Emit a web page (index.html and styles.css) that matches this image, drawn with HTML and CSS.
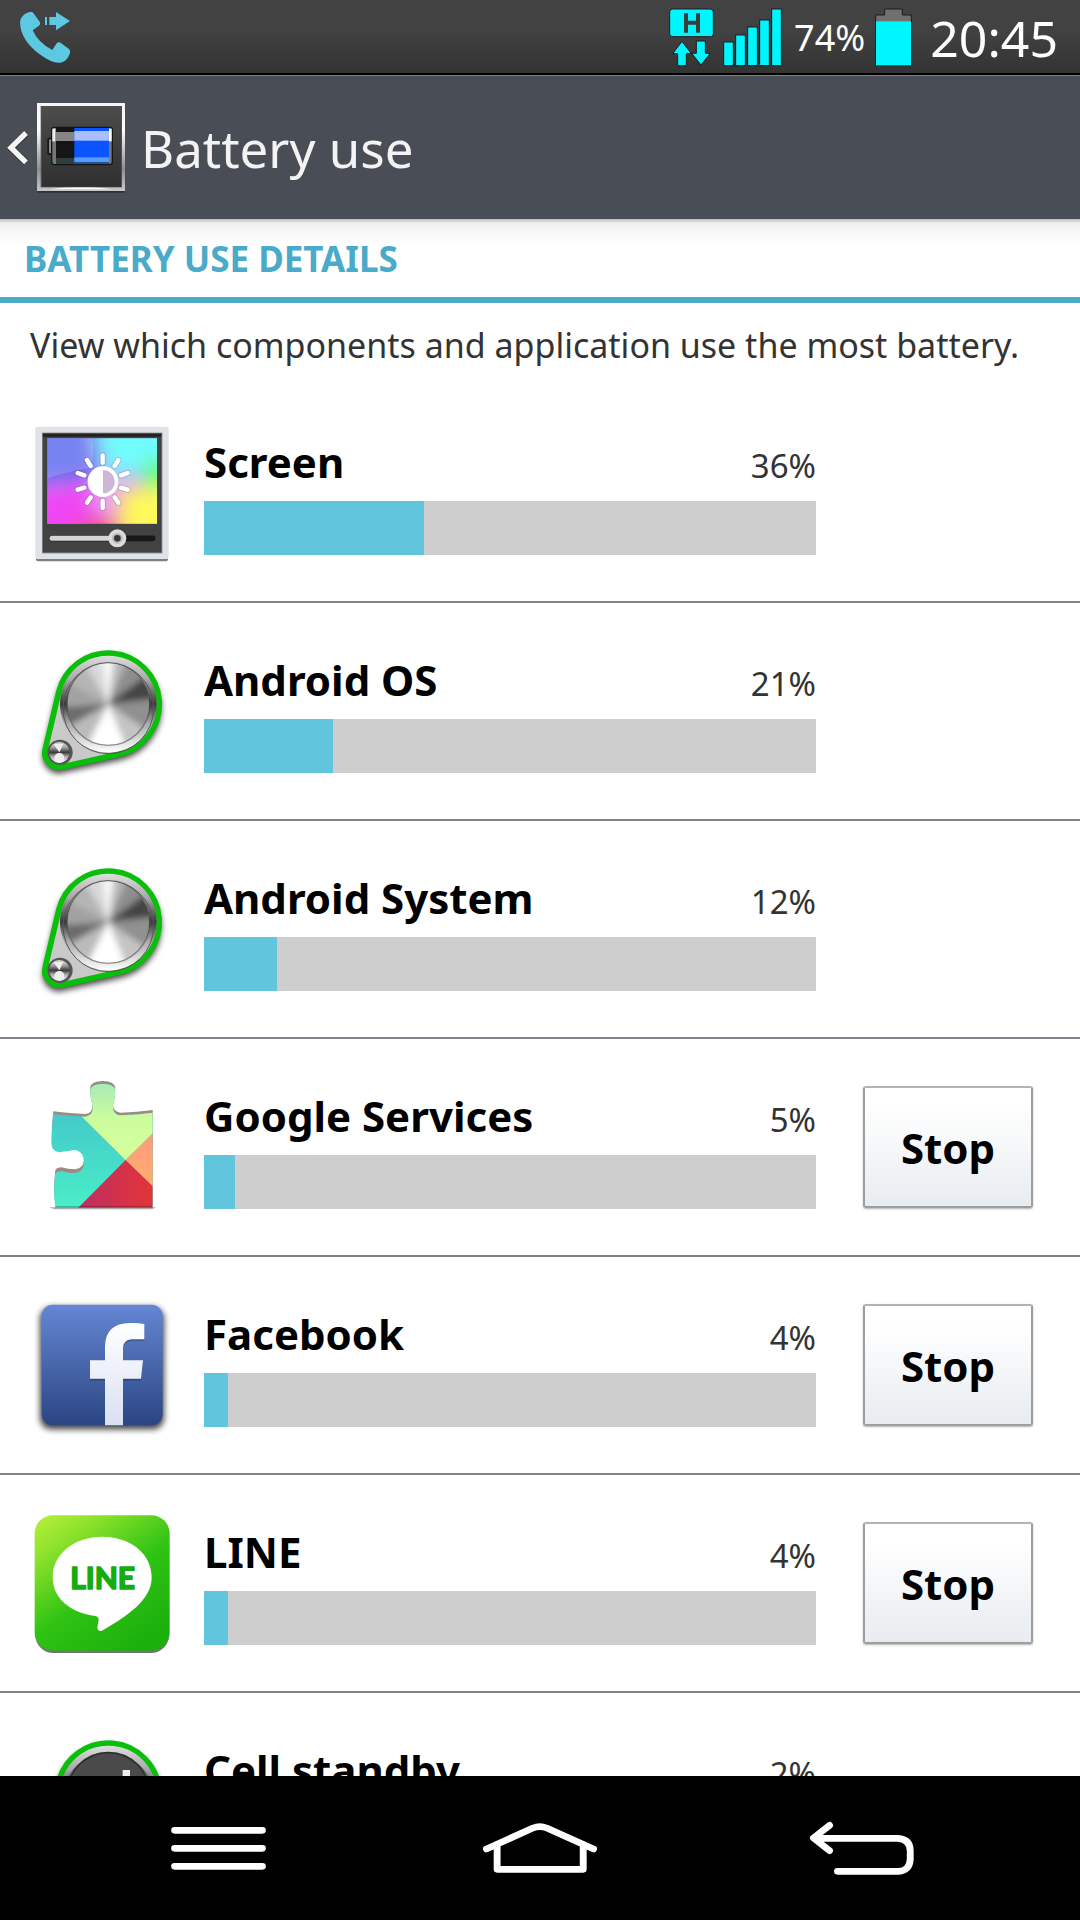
FILE: index.html
```html
<!DOCTYPE html>
<html lang="en">
<head>
    <meta charset="UTF-8">
    <meta name="viewport" content="width=device-width, initial-scale=1.0">
    <title>Battery use</title>
    <link rel="stylesheet" href="styles.css">
</head>
<body>
    <!-- Shared icon shapes -->
    <svg class="defs" aria-hidden="true">
        <defs>
            <linearGradient id="chrome" x1="0" y1="0" x2="0" y2="1">
                <stop offset="0" stop-color="#f4f4f4"/>
                <stop offset=".3" stop-color="#fff"/>
                <stop offset=".75" stop-color="#8d8d91"/>
                <stop offset="1" stop-color="#c8c8cc"/>
            </linearGradient>
            <linearGradient id="dark" x1="0" y1="0" x2="0" y2="1">
                <stop offset="0" stop-color="#4c4c4c"/>
                <stop offset="1" stop-color="#2f2f2f"/>
            </linearGradient>
            <linearGradient id="rim" x1="0" y1="0" x2="0" y2="1">
                <stop offset="0" stop-color="#dedede"/>
                <stop offset=".25" stop-color="#a8a8a8"/>
                <stop offset=".5" stop-color="#3a3a3a"/>
                <stop offset=".7" stop-color="#aaa"/>
                <stop offset="1" stop-color="#fff"/>
            </linearGradient>
            <filter id="soft" x="-20%" y="-20%" width="140%" height="140%">
                <feGaussianBlur stdDeviation="9"/>
            </filter>
            <filter id="wide" x="-30%" y="-30%" width="160%" height="160%">
                <feGaussianBlur stdDeviation="28"/>
            </filter>
            <clipPath id="face"><circle cx="265" cy="222" r="123"/></clipPath>
            <symbol id="knob" viewBox="42 39 408 408" overflow="visible">
                <path d="M116 187A153 153 0 1 1 298 372L128 410A43 43 0 0 1 76 357Z" fill="#000" opacity=".75" stroke="#000" stroke-width="12" transform="translate(0 12)" filter="url(#soft)"/>
                <path d="M116 187A153 153 0 1 1 298 372L128 410A43 43 0 0 1 76 357Z" fill="#c9c9c9" stroke="#0abf0a" stroke-width="17"/>
                <circle cx="265" cy="222" r="145" fill="url(#rim)"/>
                <circle cx="265" cy="235" r="136" fill="none" stroke="#555" stroke-width="3"/>
                <g clip-path="url(#face)">
                    <circle cx="265" cy="222" r="124" fill="#b5b5b5"/>
                    <g filter="url(#soft)">
                        <path d="M265 222L180 80H270Z" fill="#d8d8d8"/>
                        <path d="M265 222L240 60H290Z" fill="#f6f6f6"/>
                        <path d="M265 222L335 70L430 150Z" fill="#8e8e8e"/>
                        <path d="M265 222L400 120L430 205Z" fill="#454545"/>
                        <path d="M265 222L430 205L410 340Z" fill="#909090"/>
                        <path d="M265 222L410 320L330 380Z" fill="#c4c4c4"/>
                        <path d="M265 222L330 380H185Z" fill="#fff"/>
                        <path d="M265 222L180 380L100 300Z" fill="#bbb"/>
                        <path d="M265 222L110 310L100 232Z" fill="#6c6c6c"/>
                        <path d="M265 222L100 228L110 140Z" fill="#a2a2a2"/>
                    </g>
                </g>
                <circle cx="265" cy="222" r="124" fill="none" stroke="#444" stroke-width="4" opacity=".55"/>
                <circle cx="120" cy="367" r="38" fill="#555"/>
                <circle cx="118" cy="367" r="31" fill="url(#rim)"/>
                <path d="M118 367L100 342H130Z" fill="#eee"/>
                <circle cx="118" cy="384" r="15" fill="#eee"/>
            </symbol>
        </defs>
    </svg>

    <div class="phone">
        <div class="status-bar">
            <svg class="call-icon" viewBox="60 36 150 153" aria-hidden="true">
                <g fill="#5cc8e2">
                    <path d="M86 37Q95 33 100 39L119 65Q123 71 117 77L98 91Q114 128 157 150L169 131Q174 124 182 128L206 146Q212 151 210 159Q202 184 182 188Q158 192 119 163Q61 120 60 66Q63 45 86 37Z"/>
                    <path d="M135 51H141V75H135ZM148 51H168V36L210 63L168 91V75H148Z"/>
                </g>
            </svg>
            <div class="status-info">
                <svg class="network-icon" viewBox="90 26 135 177" aria-hidden="true">
                    <g fill="#00f6ff" stroke="#1c1c1c" stroke-width="3">
                        <rect x="92" y="29" width="131" height="83" rx="9"/>
                        <path d="M129 126L157 163H142V199H116V163H101Z"/>
                        <path d="M172 125H199V162H214L186 197L158 162H172Z"/>
                    </g>
                    <path d="M135 42H147V64H171V42H183V100H171V76H147V100H135Z" fill="#3c3c3c"/>
                </svg>
                <svg class="signal-icon" viewBox="252 23 177 177" aria-hidden="true">
                    <g fill="#00f6ff" stroke="#1c1c1c" stroke-width="3">
                        <rect x="254" y="125" width="29" height="71"/>
                        <rect x="290" y="104" width="29" height="92"/>
                        <rect x="326" y="80" width="29" height="116"/>
                        <rect x="362" y="59" width="29" height="137"/>
                        <rect x="398" y="26" width="29" height="170"/>
                    </g>
                </svg>
                <span class="charge">74%</span>
                <svg class="charge-icon" viewBox="708 23 111 177" aria-hidden="true">
                    <path d="M710 196V44H737V26H790V44H817V196Z" fill="#707070" stroke="#1c1c1c" stroke-width="3"/>
                    <rect x="711" y="63" width="105" height="132" fill="#00f6ff"/>
                </svg>
                <span class="clock">20:45</span>
            </div>
        </div>

        <header class="title-bar">
            <button class="back" aria-label="Back">
                <svg class="chevron" viewBox="21 390 66 108" aria-hidden="true">
                    <path d="M79 400L34 444L79 488" fill="none" stroke="#2c2f34" stroke-width="22" opacity=".5"/>
                    <path d="M78 399L33 443L78 487" fill="none" stroke="#f6f6f6" stroke-width="16"/>
                </svg>
                <svg class="app-icon" viewBox="111 309 264 270" aria-hidden="true">
                    <rect x="112" y="314" width="263" height="264" fill="#2d3036"/>
                    <rect x="111" y="309" width="264" height="264" fill="url(#chrome)"/>
                    <path d="M150 568H336L280 561H206Z" fill="#fff"/>
                    <rect x="122" y="318" width="244" height="244" fill="#4f4e4b"/>
                    <rect x="126" y="322" width="237" height="238" fill="url(#dark)"/>
                    <rect x="142" y="413" width="18" height="52" rx="6" fill="#161616"/>
                    <rect x="147" y="418" width="10" height="42" rx="3" fill="#8a8a8a"/>
                    <rect x="153" y="380" width="186" height="116" rx="9" fill="#151515"/>
                    <rect x="157" y="384" width="178" height="108" rx="6" fill="#777"/>
                    <rect x="157" y="386" width="9" height="38" fill="#eee"/>
                    <rect x="327" y="386" width="8" height="38" fill="#fff"/>
                    <rect x="168" y="384" width="57" height="108" fill="#151515"/>
                    <rect x="168" y="396" width="57" height="27" fill="#858585"/>
                    <rect x="168" y="474" width="57" height="18" fill="#303c40"/>
                    <rect x="223" y="384" width="104" height="108" fill="#0a55ff"/>
                    <rect x="223" y="393" width="104" height="29" fill="#aabfff"/>
                    <rect x="223" y="472" width="104" height="14" fill="#5a9cf5"/>
                    <rect x="223" y="486" width="104" height="6" fill="#1a5590"/>
                </svg>
            </button>
            <h1 class="title">Battery use</h1>
        </header>

        <main class="content">
            <h2 class="section-title">BATTERY USE DETAILS</h2>
            <p class="note">View which components and application use the most battery.</p>

            <ul class="usage-list">
                <li class="usage">
                    <svg class="icon" viewBox="42 45 408 408" aria-hidden="true">
                        <defs>
                            <clipPath id="display"><rect x="82" y="85" width="329" height="256"/></clipPath>
                        </defs>
                        <rect x="48" y="60" width="396" height="394" rx="6" fill="#000" opacity=".5"/>
                        <rect x="46" y="50" width="400" height="397" rx="6" fill="#dfe2e6"/>
                        <rect x="66" y="68" width="361" height="362" fill="#777"/>
                        <rect x="69" y="71" width="355" height="356" fill="#424242"/>
                        <rect x="69" y="71" width="355" height="9" fill="#222"/>
                        <g clip-path="url(#display)">
                            <rect x="82" y="85" width="329" height="256" fill="#e8a0f0"/>
                            <g filter="url(#wide)">
                                <path d="M20 20H215L240 210L20 235Z" fill="#5f6cf0"/>
                                <path d="M220 20H470V180L260 200Z" fill="#6ffcff"/>
                                <path d="M370 150H480V260L370 235Z" fill="#60ff70"/>
                                <path d="M20 250L210 215L230 400H20Z" fill="#f045f5"/>
                                <path d="M180 325H330V400H150Z" fill="#f0508a"/>
                                <path d="M300 240L480 230V400H300Z" fill="#fff95c"/>
                            </g>
                            <path d="M82 85H215Q230 130 205 175Q140 185 82 205Z" fill="#fff" opacity=".16"/>
                        </g>
                        <g stroke="#555" stroke-width="19" stroke-linecap="round" opacity=".22">
                            <path d="M248 136V158M248 272V294M201 150L212 168M295 150L284 168M173 189L193 196M323 189L303 196M173 239L193 233M323 239L303 233M201 278L212 262M295 278L284 262"/>
                        </g>
                        <g stroke="#fff" stroke-width="13" stroke-linecap="round">
                            <path d="M248 136V158M248 272V294M201 150L212 168M295 150L284 168M173 189L193 196M323 189L303 196M173 239L193 233M323 239L303 233M201 278L212 262M295 278L284 262"/>
                        </g>
                        <circle cx="249" cy="215" r="46" fill="#fff"/>
                        <path d="M249 180A35 35 0 0 1 249 250Z" fill="#cdb6d8"/>
                        <path d="M96 385H398" stroke="#171717" stroke-width="17" stroke-linecap="round"/>
                        <path d="M96 385H270" stroke="#d5d5d5" stroke-width="15" stroke-linecap="round"/>
                        <circle cx="292" cy="385" r="27" fill="#dcdcdc"/>
                        <circle cx="292" cy="385" r="16" fill="#b8b8b8"/>
                        <circle cx="292" cy="385" r="10" fill="#35383b"/>
                    </svg>
                    <div class="details">
                        <div class="labels">
                            <span class="name">Screen</span>
                            <span class="percent">36%</span>
                        </div>
                        <div class="bar"><div class="fill" style="width: 36%"></div></div>
                    </div>
                    <div class="action"></div>
                </li>
                <li class="usage">
                    <svg class="icon" aria-hidden="true"><use href="#knob"/></svg>
                    <div class="details">
                        <div class="labels">
                            <span class="name">Android OS</span>
                            <span class="percent">21%</span>
                        </div>
                        <div class="bar"><div class="fill" style="width: 21%"></div></div>
                    </div>
                    <div class="action"></div>
                </li>
                <li class="usage">
                    <svg class="icon" aria-hidden="true"><use href="#knob"/></svg>
                    <div class="details">
                        <div class="labels">
                            <span class="name">Android System</span>
                            <span class="percent">12%</span>
                        </div>
                        <div class="bar"><div class="fill" style="width: 12%"></div></div>
                    </div>
                    <div class="action"></div>
                </li>
                <li class="usage">
                    <svg class="icon" viewBox="41 57 395 408" preserveAspectRatio="none" aria-hidden="true">
                        <defs>
                            <linearGradient id="teal" x1="0" y1="0" x2="0" y2="1">
                                <stop offset="0" stop-color="#42bccb"/>
                                <stop offset="1" stop-color="#49efc7"/>
                            </linearGradient>
                            <linearGradient id="lime" x1="0" y1="0" x2="0" y2="1">
                                <stop offset="0" stop-color="#a5eab5"/>
                                <stop offset=".5" stop-color="#cdfc9e"/>
                                <stop offset="1" stop-color="#d6ff9c"/>
                            </linearGradient>
                            <linearGradient id="red" x1="0" y1="0" x2="1" y2="0">
                                <stop offset="0" stop-color="#be2c62"/>
                                <stop offset="1" stop-color="#e33539"/>
                            </linearGradient>
                            <linearGradient id="peach" x1="0" y1="0" x2="0" y2="1">
                                <stop offset="0" stop-color="#ff9882"/>
                                <stop offset="1" stop-color="#ffb069"/>
                            </linearGradient>
                            <path id="piece" d="M97 162Q150 168 190 170Q212 167 212 142Q204 115 204 90Q207 72 241 71Q274 72 277 90Q277 115 270 140Q271 164 292 166Q340 164 386 158V443H103Q96 390 103 341Q110 331 130 335Q186 350 186 305Q184 270 155 270Q125 276 112 277Q90 270 92 250Q92 205 97 162Z"/>
                            <clipPath id="puzzle"><use href="#piece"/></clipPath>
                        </defs>
                        <path d="M85 442H396L384 448H100Z" fill="#555" opacity=".5"/>
                        <use href="#piece" y="-8" fill="#9a8c85"/>
                        <path d="M103 341Q100 322 120 322Q140 328 160 328Q186 325 186 300V325Q180 345 150 345Z" fill="#9a8c85"/>
                        <g clip-path="url(#puzzle)">
                            <rect x="80" y="60" width="310" height="390" fill="url(#teal)"/>
                            <path d="M180 170V60H390V216L307 300Z" fill="url(#lime)"/>
                            <path d="M307 300L390 216V385Z" fill="url(#peach)"/>
                            <path d="M307 300L386 379V445H168Z" fill="url(#red)"/>
                            <rect x="80" y="439" width="310" height="5" opacity=".35"/>
                        </g>
                    </svg>
                    <div class="details">
                        <div class="labels">
                            <span class="name">Google Services</span>
                            <span class="percent">5%</span>
                        </div>
                        <div class="bar"><div class="fill" style="width: 5%"></div></div>
                    </div>
                    <div class="action"><button class="stop">Stop</button></div>
                </li>
                <li class="usage">
                    <svg class="icon" viewBox="42 51 408 408" aria-hidden="true">
                        <defs>
                            <linearGradient id="blue" x1="0" y1="0" x2="0" y2="1">
                                <stop offset="0" stop-color="#6487d4"/>
                                <stop offset="1" stop-color="#2b4582"/>
                            </linearGradient>
                            <linearGradient id="white" x1="0" y1="0" x2="0" y2="1">
                                <stop offset="0" stop-color="#fff"/>
                                <stop offset="1" stop-color="#dae0f3"/>
                            </linearGradient>
                        </defs>
                        <rect x="60" y="82" width="372" height="366" rx="34" opacity=".75" filter="url(#soft)"/>
                        <rect x="65" y="74" width="363" height="362" rx="34" fill="url(#blue)"/>
                        <path d="M255 436V302H210V247H255V205Q256 136 330 135Q352 134 373 138V184H335Q309 186 309 212V247H369L363 302H309V436Z" opacity=".2"/>
                        <path d="M255 436V296H210V241H255V199Q256 130 330 129Q352 128 373 132V178H335Q309 180 309 206V241H369L363 296H309V436Z" fill="url(#white)"/>
                    </svg>
                    <div class="details">
                        <div class="labels">
                            <span class="name">Facebook</span>
                            <span class="percent">4%</span>
                        </div>
                        <div class="bar"><div class="fill" style="width: 4%"></div></div>
                    </div>
                    <div class="action"><button class="stop">Stop</button></div>
                </li>
                <li class="usage">
                    <svg class="icon" viewBox="42 75 408 408" aria-hidden="true">
                        <defs>
                            <linearGradient id="green" x1="0" y1="0" x2=".7" y2="1">
                                <stop offset="0" stop-color="#b9f03c"/>
                                <stop offset=".22" stop-color="#8fe22c"/>
                                <stop offset=".6" stop-color="#2fc313"/>
                                <stop offset="1" stop-color="#1cb00d"/>
                            </linearGradient>
                        </defs>
                        <rect x="46" y="84" width="401" height="405" rx="54" opacity=".55"/>
                        <rect x="44" y="76" width="405" height="406" rx="54" fill="url(#green)"/>
                        <path d="M247 140C330 140 395 190 395 262C395 320 345 365 250 420Q233 428 232 412L236 389Q236 380 226 378C150 368 98 325 98 262C98 190 165 140 247 140Z" fill="#fff"/>
                        <text class="line-mark" x="248" y="296" text-anchor="middle">LINE</text>
                    </svg>
                    <div class="details">
                        <div class="labels">
                            <span class="name">LINE</span>
                            <span class="percent">4%</span>
                        </div>
                        <div class="bar"><div class="fill" style="width: 4%"></div></div>
                    </div>
                    <div class="action"><button class="stop">Stop</button></div>
                </li>
                <li class="usage">
                    <svg class="icon" viewBox="42 39 408 408" aria-hidden="true">
                        <use href="#knob" x="42" y="39" width="408" height="408"/>
                        <circle cx="265" cy="222" r="124" fill="#4a4a4a" stroke="#2f2f2f" stroke-width="5"/>
                        <path d="M308 150H330V280H308ZM272 180H294V280H272ZM236 210H258V280H236ZM200 240H222V280H200Z" fill="#eee"/>
                    </svg>
                    <div class="details">
                        <div class="labels">
                            <span class="name">Cell standby</span>
                            <span class="percent">2%</span>
                        </div>
                        <div class="bar"><div class="fill" style="width: 2%"></div></div>
                    </div>
                    <div class="action"></div>
                </li>
            </ul>
        </main>

        <nav class="nav-bar">
            <button class="nav-button" aria-label="Menu">
                <svg class="nav-menu" viewBox="454 420 284 168" aria-hidden="true">
                    <path d="M464 451H728M464 505H728M464 559H728"/>
                </svg>
            </button>
            <button class="nav-button" aria-label="Home">
                <svg class="nav-home" viewBox="125 270 331 168" preserveAspectRatio="none" aria-hidden="true">
                    <path d="M135 357L270 294Q290 286 310 294L446 357M166 348V418H416V348"/>
                </svg>
            </button>
            <button class="nav-button" aria-label="Back">
                <svg class="nav-back" viewBox="1074 270 303 168" preserveAspectRatio="none" aria-hidden="true">
                    <path d="M1131 286L1084 324L1131 362M1090 325H1330Q1366 328 1366 362V388Q1364 422 1332 424H1154"/>
                </svg>
            </button>
        </nav>
    </div>
</body>
</html>
```
FILE: styles.css
```css
* {
    box-sizing: border-box;
}

body {
    margin: 0;
    background-color: #fff;
    font-family: 'Noto Sans', 'Open Sans', sans-serif;
    color: #333;
}

button {
    border: none;
    background: none;
    padding: 0;
    font-family: inherit;
    cursor: pointer;
}

svg {
    display: block;
    flex-shrink: 0;
}

.defs {
    position: absolute;
    width: 0;
    height: 0;
}

.phone {
    display: flex;
    flex-direction: column;
    height: 100vh;
    overflow: hidden;
}

/* Status bar */
.status-bar {
    display: flex;
    flex-shrink: 0;
    align-items: center;
    justify-content: space-between;
    height: 75px;
    padding: 2px 22px 0 20px;
    background: linear-gradient(#424242 40%, #333);
    border-bottom: 2px solid #000;
    color: #fff;
}

.call-icon {
    width: 50px;
    height: 51px;
}

.status-info {
    display: flex;
    align-items: center;
}

.network-icon {
    width: 45px;
    height: 59px;
    margin-right: 9px;
}

.signal-icon {
    width: 59px;
    height: 59px;
    margin-right: 12px;
}

.charge {
    font-size: 36px;
    line-height: 48px;
    margin-right: 10px;
}

.charge-icon {
    width: 37px;
    height: 59px;
    margin-right: 18px;
}

.clock {
    font-size: 50px;
    line-height: 64px;
}

/* Title bar */
.title-bar {
    display: flex;
    flex-shrink: 0;
    align-items: center;
    height: 144px;
    padding-left: 7px;
    background-color: #494d55;
    border-top: 1px solid #7c7d80;
    color: #f3f3f3;
}

.back {
    display: flex;
    align-items: center;
    gap: 8px;
}

.chevron {
    width: 22px;
    height: 36px;
}

.app-icon {
    width: 88px;
    height: 90px;
}

.title {
    margin: 0 0 0 16px;
    font-size: 51px;
    font-weight: 400;
    line-height: 64px;
}

/* Usage list */
.content {
    flex: 1;
    min-height: 0;
    overflow: hidden;
    background: linear-gradient(#bbb, #eee 4px, #f8f8f8 12px, #fff 26px);
}

.section-title {
    margin: 0;
    padding: 16px 24px 14px;
    border-bottom: 6px solid #4aaaca;
    color: #4aaaca;
    font-size: 35px;
    font-weight: 700;
    line-height: 48px;
}

.note {
    margin: 0;
    padding: 18px 30px 16px;
    font-size: 34px;
    line-height: 48px;
}

.usage-list {
    margin: 0;
    padding: 0;
    list-style: none;
}

.usage {
    display: flex;
    align-items: center;
    height: 218px;
    padding: 0 47px 0 34px;
    border-bottom: 2px solid #7f838c;
}

.icon {
    width: 136px;
    height: 136px;
    margin-right: 34px;
    overflow: visible;
}

.details {
    flex: 1;
}

.labels {
    display: flex;
    align-items: baseline;
    justify-content: space-between;
    margin-bottom: 4px;
    line-height: 62px;
}

.name {
    color: #000;
    font-size: 42px;
    font-weight: 700;
}

.percent {
    font-size: 33px;
}

.bar {
    height: 54px;
    background-color: #cecece;
}

.fill {
    height: 100%;
    background-color: #61c6dd;
}

.action {
    width: 170px;
    margin-left: 47px;
}

.stop {
    width: 100%;
    height: 122px;
    border: 2px solid #9c9ea0;
    border-top-color: #b0b3b8;
    border-radius: 3px;
    background: linear-gradient(#fff 15%, #e8ecf0);
    box-shadow: 0 1px 2px rgba(0, 0, 0, 0.3);
    color: #000;
    font-size: 42px;
    font-weight: 700;
}

.line-mark {
    fill: #14ac10;
    stroke: #14ac10;
    stroke-width: 5px;
    stroke-linejoin: round;
    font-family: Lato, sans-serif;
    font-size: 90px;
    font-weight: 700;
}

/* Navigation bar */
.nav-bar {
    display: flex;
    flex-shrink: 0;
    align-items: center;
    height: 144px;
    padding: 0 57px;
    background-color: #000;
}

.nav-button {
    display: flex;
    flex: 1;
    justify-content: center;
}

.nav-button path {
    fill: none;
    stroke: #fff;
    stroke-width: 20px;
    stroke-linecap: round;
    stroke-linejoin: round;
}

.nav-menu {
    width: 95px;
    height: 56px;
}

.nav-home {
    width: 114px;
    height: 56px;
}

.nav-back {
    width: 104px;
    height: 56px;
}
```
